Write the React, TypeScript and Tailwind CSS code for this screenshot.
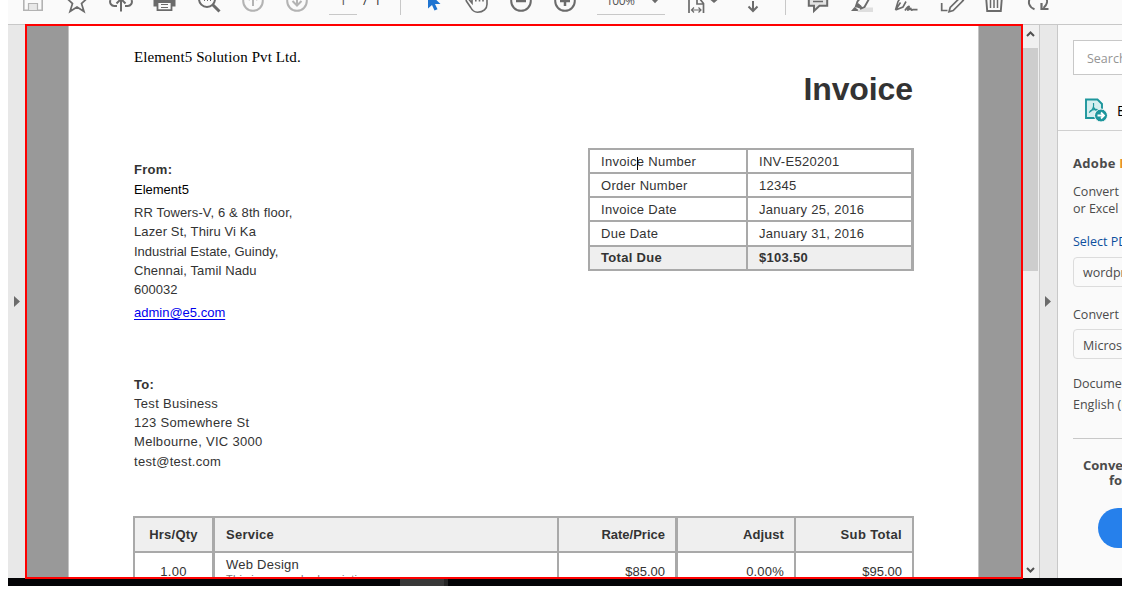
import React from "react";

const G = "#6b6b6b";
const L = "#b3b3b3";

function Glyph({ children, w = 44, c = G }: { children: React.ReactNode; w?: number; c?: string }) {
  return (
    <svg width={w} height={24} viewBox={`0 0 ${w} 24`} fill="none" stroke={c} strokeWidth={2} className="shrink-0">
      {children}
    </svg>
  );
}

function Toolbar() {
  return (
    <div className="flex h-6 items-start overflow-hidden bg-[#fafafa] pl-[3px]">
      <Glyph c={L}>
        <path d="M12.800 -4V10.200H31.200V-4" strokeWidth="1.600" />
        <path d="M17.500 10V3.500H26.500V10" strokeWidth="1.200" fill="#e8e8e8" />
      </Glyph>
      <Glyph>
        <path d="M22 -9l3 7h7.500l-6 5.500 2.500 8L22 7l-7 4.500 2.500-8-6-5.500H19z" strokeWidth="1.700" />
      </Glyph>
      <Glyph>
        <path d="M22 11.500V0M17.500 3.500L22 -1l4.500 4.500" />
        <path d="M18 6h-2.500a4.200 4.200 0 0 1-4-6M26 6h2.500a4.200 4.200 0 0 0 4-6" />
      </Glyph>
      <Glyph>
        <path d="M10.500 -3h22V6.500H10.500z" fill={G} stroke="none" />
        <path d="M14.500 2h14v8.200h-14z" fill="#fafafa" strokeWidth="1.800" />
        <path d="M18 4.500h7M18 7.500h7" strokeWidth="1" />
      </Glyph>
      <Glyph>
        <circle cx="20" cy="-1" r="8" />
        <path d="M25.500 4.500l7 7" strokeWidth="3" />
        <path d="M17 .5h1M20 .5h1M23 .5h1" strokeWidth="1" />
      </Glyph>
      <Glyph c={L}>
        <circle cx="22" cy="1" r="9.800" />
        <path d="M22 6V-5M17.500 0l4.500-4.500L26.500 0" />
      </Glyph>
      <Glyph c={L}>
        <circle cx="22" cy="1" r="9.800" />
        <path d="M22 -5V5M17.500 1l4.500 4.500L26.500 1" />
      </Glyph>
      <div className="flex h-6 w-[81px] shrink-0 pl-[10px] font-['Open_Sans',sans-serif] text-[13px] leading-[15px] text-[#333]">
        <div className="-mt-[7px] h-[22px] w-7 border-b border-[#c8c8c8] text-center text-[#555]">1</div>
        <span className="-mt-[7px] ml-[6px]">/</span>
        <span className="-mt-[7px] ml-[6px]">1</span>
      </div>
      <div className="h-[15px] w-px shrink-0 bg-[#c8c8c8]" />
      <div className="w-[10px] shrink-0" />
      <Glyph>
        <path d="M17 -8V8.500l4-3.500 2.500 5.500 3-1.200L24 4h5.500z" fill="#1f74d1" stroke="none" />
      </Glyph>
      <Glyph>
        <path d="M17 -4v7l-3-3.500c-1.500-1.200-3.500 .2-2.500 1.700l4.200 6.300c1.500 3 3.800 4.700 6.800 4.700 6 0 9.500-3.500 9.500-8v-8M20.800 -4v5.500M24.500 -4v5.500M28 -4v5.500" strokeWidth="1.600" />
      </Glyph>
      <Glyph>
        <circle cx="22" cy="1" r="9.800" />
        <path d="M17 1h10" strokeWidth="2.500" />
      </Glyph>
      <Glyph>
        <circle cx="22" cy="1" r="9.800" />
        <path d="M17 1h10M22 -4V6" strokeWidth="2.500" />
      </Glyph>
      <div className="h-6 w-[88px] shrink-0 pl-[10px]">
        <div className="flex h-[15px] w-[68px] items-start border-b border-[#c8c8c8] pl-[9px] font-['Open_Sans',sans-serif] text-[12px] leading-[15px] tracking-[-0.500px] text-[#555]">
          <span className="-mt-[7px]">100%</span>
          <svg width="8" height="5" viewBox="0 0 8 5" className="ml-[16px]">
            <path d="M0 -1h8L4 3.200z" fill={G} />
          </svg>
        </div>
      </div>
      <Glyph w={56}>
        <path d="M14 13V-4H22.500L28.500 3.500V13M22 -3V4h6" strokeWidth="1.700" />
        <path d="M16.500 10h9.500M19 7.500L16.500 10l2.500 2.500M23.500 7.500l2.500 2.500-2.500 2.500" strokeWidth="1.200" />
        <path d="M35.500 0h7L39 3z" fill={G} stroke="none" />
      </Glyph>
      <Glyph>
        <path d="M22 1v10M17.500 6.500L22 11l4.500-4.500" />
      </Glyph>
      <div className="ml-[10px] mr-[10px] h-[15px] w-px shrink-0 bg-[#c8c8c8]" />
      <Glyph>
        <path d="M12.800 -4V5.800H18V11l5.500-5.200h7.700V-4" fill="#e4e4e4" />
        <path d="M17 1.500h10" strokeWidth="1.500" />
      </Glyph>
      <Glyph>
        <path d="M22 7.500h11v4.500H17z" fill="#dedede" stroke="none" />
        <path d="M11 11l3.500-4 4 3-1 1z" fill={G} stroke="none" />
        <path d="M16.500 3.500l5.500 4.500M15.500 7.500l2-6 4-5M20 9l4.500-2L29 -1" strokeWidth="1.900" />
        <path d="M16 7l2-4 3.500 3-2 2.500z" fill={G} stroke="none" />
      </Glyph>
      <Glyph>
        <path d="M11.500 10L14 1.500 17 -3M11.500 10l7.500-3 3-5.500M11.500 10l5-7.500" strokeWidth="1.600" />
        <path d="M21 10.500c2-3 4.500-5.500 4-3.500s-2.500 4 0 2.500 1.500-1.500 2 0 1.500-.5 2.500.2H33.500" strokeWidth="1.800" />
      </Glyph>
      <Glyph>
        <path d="M13.700 3v7.500H19.500" strokeWidth="1.700" />
        <path d="M21 11.700l1.200-4.200 10-10 3 3-10 10z" strokeWidth="1.700" />
      </Glyph>
      <Glyph>
        <path d="M14 -4l1.200 15h13.600L30 -4" strokeWidth="1.900" />
        <path d="M18.500 0v8M22 0v8M25.500 0v8" strokeWidth="1.500" />
      </Glyph>
      <Glyph>
        <path d="M18.500 9.200C12.500 7 12 2 14 -2M30 -2c2 3 1 7-2.500 10" />
        <path d="M25.500 3v6h7" strokeWidth="2.200" />
      </Glyph>
    </div>
  );
}

const summary = [
  ["Invoice Number", "INV-E520201", "h-[22px]"],
  ["Order Number", "12345", "h-[22px]"],
  ["Invoice Date", "January 25, 2016", "h-[22px]"],
  ["Due Date", "January 31, 2016", "h-[23px]"],
];

function Summary() {
  return (
    <div className="flex h-[123px] w-[326px] flex-col gap-[2px] bg-[#a9a9a9] py-[2px] pl-[2px] pr-[3px] leading-[24px] tracking-[0.3px]">
      {summary.map(([k, v, h]) => (
        <div key={k} className={`flex gap-[2px] ${h}`}>
          <div className="w-[156px] bg-white pl-[11px]">{k}</div>
          <div className="flex-1 bg-white pl-[11px]">{v}</div>
        </div>
      ))}
      <div className="flex h-[22px] gap-[2px] font-bold">
        <div className="w-[156px] bg-[#efefef] pl-[11px] leading-[21px]">Total Due</div>
        <div className="flex-1 bg-[#efefef] pl-[11px] leading-[21px]">$103.50</div>
      </div>
    </div>
  );
}

function Items() {
  return (
    <div className="ml-[64px] mt-[45px] w-[781px] bg-[#a9a9a9] pt-[2px]">
      <div className="flex h-[33px] pl-[2px] pr-[2px] font-bold leading-[33px]">
        <div className="mr-[3px] w-[77px] bg-[#efefef] text-center tracking-[0.25px]">Hrs/Qty</div>
        <div className="mr-[2px] w-[342px] bg-[#efefef] pl-[11px] tracking-[0.25px]">Service</div>
        <div className="mr-[3px] w-[116px] bg-[#efefef] pr-[10px] text-right">Rate/Price</div>
        <div className="mr-[2px] w-[116px] bg-[#efefef] pr-[10px] text-right tracking-[0.1px]">Adjust</div>
        <div className="flex-1 bg-[#efefef] pr-[10px] text-right tracking-[0.35px]">Sub Total</div>
      </div>
      <div className="mt-[2px] flex h-[60px] pl-[2px] pr-[2px] leading-[37px]">
        <div className="mr-[3px] w-[77px] bg-white text-center tracking-[0.3px]">1.00</div>
        <div className="mr-[2px] w-[342px] bg-white pl-[11px] pt-[2px]">
          <div className="leading-[19px] tracking-[0.25px]">Web Design</div>
          <div className="-mt-px text-[11px] leading-[12px] tracking-[0.3px] text-[#777]">This is a sample description</div>
        </div>
        <div className="mr-[3px] w-[116px] bg-white pr-[10px] text-right">$85.00</div>
        <div className="mr-[2px] w-[116px] bg-white pr-[10px] text-right tracking-[0.2px]">0.00%</div>
        <div className="flex-1 bg-white pr-[10px] text-right">$95.00</div>
      </div>
    </div>
  );
}

function Viewer() {
  return (
    <div className="relative z-10 flex h-[555px] w-[998px] shrink-0 overflow-hidden border-2 border-[#ff0000] bg-[#999]">
      <div className="ml-[41px] h-full w-[911px] overflow-hidden border-x border-[#c4c4c4] bg-white font-['Liberation_Sans',Arial,sans-serif] text-[13px] text-[#333]">
        <div className="pl-[65px] pt-[21px] font-['Liberation_Serif',serif] text-[15px] leading-[20px] tracking-[0.1px] text-black">Element5 Solution Pvt Ltd.</div>
        <h1 className="mr-[65px] mt-[2px] text-right text-[32px] font-bold leading-[40px] tracking-[-0.1px]">Invoice</h1>
        <div className="mt-[39px] flex justify-between pl-[65px] pr-[64px]">
          <div className="h-[323px] pt-[12px] leading-[19px]">
            <div className="font-bold tracking-[0.3px]">From:</div>
            <div className="mt-px text-black">Element5</div>
            <div className="mt-[4px] tracking-[0.12px]">
              <div>RR Towers-V, 6 &amp; 8th floor,</div>
              <div>Lazer St, Thiru Vi Ka</div>
              <div className="mt-px tracking-[0px]">Industrial Estate, Guindy,</div>
              <div>Chennai, Tamil Nadu</div>
              <div className="tracking-[0px]">600032</div>
            </div>
            <div className="mt-[4px] text-[#0000ee] underline underline-offset-2">admin@e5.com</div>
            <div className="mt-[53px] tracking-[0.3px]">
              <div className="font-bold">To:</div>
              <div>Test Business</div>
              <div>123 Somewhere St</div>
              <div>Melbourne, VIC 3000</div>
              <div className="mt-px">test@test.com</div>
            </div>
          </div>
          <div className="relative">
            <Summary />
            <svg width="1" height="13" className="absolute left-[49px] top-[9px]">
              <path d="M.5 0v13" stroke="#000" />
            </svg>
          </div>
        </div>
        <Items />
      </div>
    </div>
  );
}

function Scrollbar() {
  return (
    <div className="flex w-4 shrink-0 flex-col border-t border-[#c8c8c8] bg-[#f0f0f0]">
      <svg width="16" height="23" viewBox="0 0 16 23" fill="none" stroke="#505050" strokeWidth="2">
        <path d="M4 11l3.500-3.500L11 11" />
      </svg>
      <div className="h-[223px] w-[15px] bg-[#cdcdcd]" />
      <div className="flex-1" />
      <svg width="16" height="16" viewBox="0 0 16 16" fill="none" stroke="#505050" strokeWidth="2">
        <path d="M4 6l3.500 3.500L11 6" />
      </svg>
    </div>
  );
}

function ToolsPane() {
  return (
    <div className="flex-1 overflow-hidden border-t border-[#c8c8c8] bg-[#fafafa] font-['Open_Sans',sans-serif] text-[12.500px] leading-[17px] whitespace-nowrap text-[#4b4b4b]">
      <div className="ml-[15px] mt-[15px] h-[35px] w-[220px] border border-[#c8c8c8] bg-white pl-[13px] leading-[35px] text-[#959595]">Search</div>
      <div className="flex h-[56px] border-b border-[#d0d0d0] pl-[27px] pt-[23px]">
        <svg width="23" height="25" viewBox="0 0 23 25" fill="none" stroke="#1d969c" strokeWidth="1.900" className="shrink-0">
          <path d="M1 1.500h11.500l4.500 4.500V20H1z" fill="#d5eff0" />
          <path d="M4 14.500c4-2 5-6 4.500-9.500M8.500 9c1 3 3 4 5.500 4M5 13c2-1.500 5-2 8-1.500" strokeWidth="1.200" />
          <circle cx="16" cy="17.500" r="6.500" fill="#1d969c" stroke="#fafafa" strokeWidth="1" />
          <path d="M12.500 17.500h6M16 14.500l3 3-3 3" stroke="#fff" strokeWidth="1.800" />
        </svg>
        <span className="ml-[8px] mt-[4px] pl-px text-[14px] text-black">Export PDF</span>
      </div>
      <div className="pl-[15px]">
        <div className="mt-[24px] text-[13px] font-bold tracking-[0.3px]">Adobe <span className="text-[#e8912d]">Export PDF</span></div>
        <div className="mt-[11px]">Convert PDF Files to Word</div>
        <div>or Excel Online</div>
        <div className="mt-[16px] text-[#0d4f9e]">Select PDF File</div>
        <div className="mt-[7px] h-[30px] w-[220px] rounded border border-[#dcdcdc] pl-[9px] leading-[29px]">wordpress.pdf</div>
        <div className="mt-[19px]">Convert to</div>
        <div className="mt-[6px] h-[30px] w-[220px] rounded border border-[#dcdcdc] pl-[9px] leading-[31px]">Microsoft Word</div>
        <div className="mt-[16px]">Document Language:</div>
        <div className="mt-[4px]">English (U.S.)</div>
        <div className="mt-[25px] h-px w-[220px] bg-[#c8c8c8]" />
        <div className="mt-[18px] pl-[10px] text-[13px] font-bold leading-[16px]">Convert and edit PDFs</div>
        <div className="-mt-px pl-[36px] text-[13px] font-bold leading-[16px]">for free</div>
        <div className="ml-[25px] mt-[20px] h-10 w-[160px] rounded-full bg-[#2680eb]" />
      </div>
    </div>
  );
}

export default function App() {
  return (
    <div className="h-[603px] w-[1122px] overflow-hidden bg-white pl-2">
      <Toolbar />
      <div className="flex h-[554px]">
        <div className="flex w-[17px] shrink-0 items-center border-t border-[#c8c8c8] bg-[#e8e8e8]">
          <svg width="17" height="12" viewBox="0 0 17 12"><path d="M6 0v11l6-5.500z" fill="#6b6b6b" /></svg>
        </div>
        <Viewer />
        <Scrollbar />
        <div className="flex w-[19px] shrink-0 items-center border border-b-0 border-[#c8c8c8] bg-[#e8e8e8]">
          <svg width="17" height="12" viewBox="0 0 17 12"><path d="M5 0v11l6-5.500z" fill="#6b6b6b" /></svg>
        </div>
        <ToolsPane />
      </div>
      <div className="flex h-2 bg-[#040406] pl-[392px]">
        <div className="w-[44px] bg-[#383838]" />
        <div className="w-[4px] bg-[#252525]" />
      </div>
    </div>
  );
}
